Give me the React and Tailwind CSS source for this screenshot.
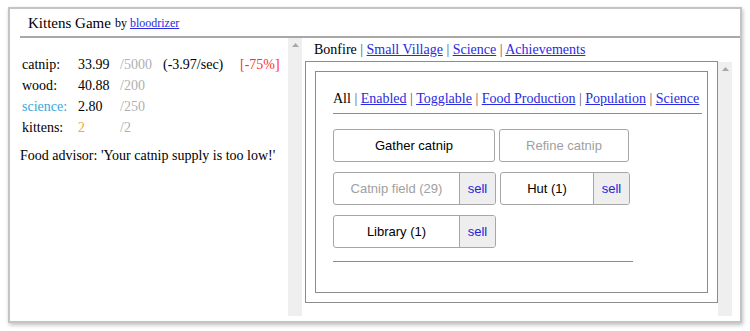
import React from "react";

const serif = { fontFamily: '"Liberation Serif", "Times New Roman", serif' };
const sans = { fontFamily: '"Liberation Sans", Arial, sans-serif' };

const resources = [
  { name: "catnip", value: "33.99", max: "/5000", rate: "(-3.97/sec)", mod: "[-75%]" },
  { name: "wood", value: "40.88", max: "/200" },
  { name: "science", value: "2.80", max: "/250", nameClass: "text-[#39a7db]" },
  { name: "kittens", value: "2", max: "/2", valueClass: "text-[#ffa040]" },
];

function Scrollbar({ className = "" }) {
  return (
    <div className={`w-[14px] shrink-0 bg-[#efefef] flex justify-center ${className}`}>
      <svg width="7" height="4" viewBox="0 0 7 4" className="mt-[5px]">
        <path d="M0 4 L3.5 0 L7 4 Z" fill="#a8a8a8" />
      </svg>
    </div>
  );
}

function Btn({ label, width, disabled, sell }) {
  return (
    <div className="flex h-[33px] border border-[#a6a6a6] rounded-[3px] overflow-hidden bg-white" style={sans}>
      <div
        className={`flex items-center justify-center text-[13px] ${disabled ? "text-[#a0a0a0]" : "text-black"}`}
        style={{ width }}
      >
        {label}
      </div>
      {sell && (
        <div className="w-[36px] flex items-center justify-center border-l border-[#a6a6a6] bg-[#eeeeee] text-[13px] text-[#2323e0]">
          sell
        </div>
      )}
    </div>
  );
}

function Links({ items }) {
  return items.map((t, i) => (
    <span key={t}>
      {i > 0 && <span className="text-[#555]"> | </span>}
      {i === 0 ? (
        <span>{t}</span>
      ) : (
        <a className="text-[#2a2ae0] underline">{t}</a>
      )}
    </span>
  ));
}

export default function App() {
  return (
    <div className="w-[750px] h-[331px] bg-white pt-[7px] pl-[8px]" style={serif}>
      <div className="w-[734px] h-[316px] border-2 border-[#c4c4c4] shadow-[1px_2px_4px_rgba(0,0,0,0.25)] flex flex-col">
        {/* Header */}
        <div className="ml-[10px] h-[29px] border-b-2 border-[#a8a8a8] flex items-center pl-[8px] pt-[1px] shrink-0">
          <span className="text-[15px] text-black">Kittens Game</span>
          <span className="text-[12px] ml-[4px] text-black">by</span>
          <a className="text-[12px] ml-[3px] text-[#2a2ae0] underline">bloodrizer</a>
        </div>

        <div className="flex flex-1 min-h-0 pb-[5px]">
          {/* Left column */}
          <div className="w-[278px] shrink-0 pl-[10px] pt-[16px] text-[14px] text-black">
            <table className="ml-[2px] border-collapse">
              <tbody>
                {resources.map((r) => (
                  <tr key={r.name} className="h-[21px]">
                    <td className={`w-[56px] ${r.nameClass || ""}`}>{r.name}:</td>
                    <td className={`w-[42px] ${r.valueClass || ""}`}>{r.value}</td>
                    <td className="w-[43px] text-[#b0b0b0]">{r.max}</td>
                    <td className="w-[77px]">{r.rate}</td>
                    <td className="text-[#ff3030]">{r.mod}</td>
                  </tr>
                ))}
              </tbody>
            </table>
            <div className="mt-[7px]">Food advisor: 'Your catnip supply is too low!'</div>
          </div>

          <Scrollbar />

          {/* Right column */}
          <div className="flex-1 flex flex-col">
            <div className="h-[23px] pl-[12px] pt-[1px] text-[14px] text-black">
              <Links items={["Bonfire", "Small Village", "Science", "Achievements"]} />
            </div>
            <div className="flex flex-1 pl-[3px]">
              <div className="w-[413px] h-[242px] border border-[#8c8c8c] p-[9px]">
                <div className="h-full border border-[#8c8c8c] px-[17px] pt-[18px]">
                  <div className="text-[14px] text-black leading-[18px] pb-[5px] border-b border-[#8c8c8c] w-[369px]">
                    <Links items={["All", "Enabled", "Togglable", "Food Production", "Population", "Science"]} />
                  </div>
                  <div className="mt-[15px] flex flex-col gap-[10px] w-[300px]">
                    <div className="flex gap-[4px]">
                      <Btn label="Gather catnip" width={160} />
                      <Btn label="Refine catnip" width={128} disabled />
                    </div>
                    <div className="flex gap-[4px]">
                      <Btn label="Catnip field (29)" width={125} disabled sell />
                      <Btn label="Hut (1)" width={92} sell />
                    </div>
                    <div className="flex gap-[4px]">
                      <Btn label="Library (1)" width={125} sell />
                    </div>
                  </div>
                  <div className="mt-[13px] border-b border-[#8c8c8c] w-[300px]" />
                </div>
              </div>
              <Scrollbar className="mt-[1px]" />
            </div>
          </div>
          <div className="w-[8px]" />
        </div>
      </div>
    </div>
  );
}
